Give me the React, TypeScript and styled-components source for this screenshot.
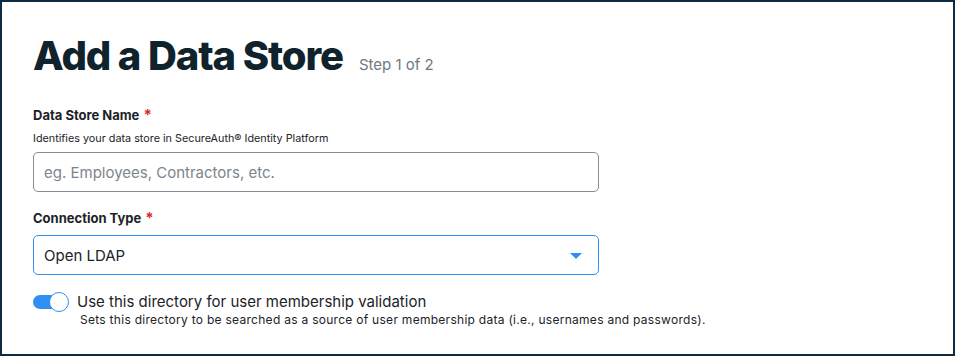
import styled, { createGlobalStyle } from "styled-components"

const GlobalStyle = createGlobalStyle`
  html, body {
    margin: 0;
    padding: 0;
    background: #ffffff;
  }
  body {
    font-family: Inter, "Noto Sans", sans-serif;
    color: #14232e;
  }
`

const Page = styled.div`
  box-sizing: border-box;
  width: 955px;
  height: 356px;
  border: 2px solid #0e2a40;
  padding: 30px 0 0 31px;
  overflow: hidden;
`

const Header = styled.div`
  display: flex;
  align-items: baseline;
  gap: 16px;
  margin-bottom: 26px;
`

const Title = styled.h1`
  margin: 0;
  font-size: 40px;
  line-height: 48px;
  font-weight: 800;
  letter-spacing: -1.1px;
  color: #10232d;
`

const Step = styled.span`
  font-size: 15px;
  color: #6d7a83;
`

const Field = styled.div`
  width: 566px;
  display: flex;
  flex-flow: column;
  margin-bottom: 17px;
`

const Label = styled.label`
  font-size: 13px;
  font-weight: 700;
  color: #1c2328;
  line-height: 18px;
  margin-bottom: 8px;

  > span {
    color: #e0262a;
    margin-left: 4px;
    font-size: 15px;
  }
`

const Help = styled.div`
  font-size: 10.8px;
  color: #1c2328;
  line-height: 14px;
  margin-bottom: 6px;
`

const Box = styled.div<{ $active?: boolean }>`
  box-sizing: border-box;
  height: 40px;
  border: 1px solid ${(p) => (p.$active ? "#2f8ff2" : "#858e96")};
  border-radius: 5px;
  display: flex;
  align-items: center;
  justify-content: space-between;
  padding: 0 16px 0 10px;
  font-size: 15px;
  color: ${(p) => (p.$active ? "#1c2328" : "#7d858c")};
`

const Caret = styled.div`
  width: 0;
  height: 0;
  border-left: 6px solid transparent;
  border-right: 6px solid transparent;
  border-top: 6px solid #2f8ff2;
  margin-top: 2px;
`

const ToggleRow = styled.div`
  display: flex;
  align-items: flex-start;
  gap: 8px;
  margin-top: 13px;
`

const Switch = styled.div`
  position: relative;
  width: 36px;
  height: 20px;
  flex-shrink: 0;
  display: flex;
  align-items: center;
`

const Track = styled.div`
  width: 34px;
  height: 14px;
  border-radius: 7px;
  background: #2f8ff2;
`

const Knob = styled.div`
  position: absolute;
  right: 0;
  top: 0;
  box-sizing: border-box;
  width: 20px;
  height: 20px;
  border-radius: 50%;
  background: #fff;
  border: 1.5px solid #2f8ff2;
`

const ToggleText = styled.div`
  display: flex;
  flex-flow: column;
`

const ToggleTitle = styled.div`
  font-size: 15px;
  line-height: 20px;
  color: #1c2328;
`

const ToggleHelp = styled.div`
  font-size: 12px;
  line-height: 16px;
  letter-spacing: 0.28px;
  color: #1c2328;
  margin-left: 3px;
`

export default function App() {
  return (
    <>
      <GlobalStyle />
      <Page>
        <Header>
          <Title>Add a Data Store</Title>
          <Step>Step 1 of 2</Step>
        </Header>
        <Field>
          <Label>
            Data Store Name<span>*</span>
          </Label>
          <Help>Identifies your data store in SecureAuth® Identity Platform</Help>
          <Box>eg. Employees, Contractors, etc.</Box>
        </Field>
        <Field>
          <Label>
            Connection Type<span>*</span>
          </Label>
          <Box $active>
            Open LDAP
            <Caret />
          </Box>
        </Field>
        <ToggleRow>
          <Switch>
            <Track />
            <Knob />
          </Switch>
          <ToggleText>
            <ToggleTitle>Use this directory for user membership validation</ToggleTitle>
            <ToggleHelp>
              Sets this directory to be searched as a source of user membership data (i.e., usernames and passwords).
            </ToggleHelp>
          </ToggleText>
        </ToggleRow>
      </Page>
    </>
  )
}
